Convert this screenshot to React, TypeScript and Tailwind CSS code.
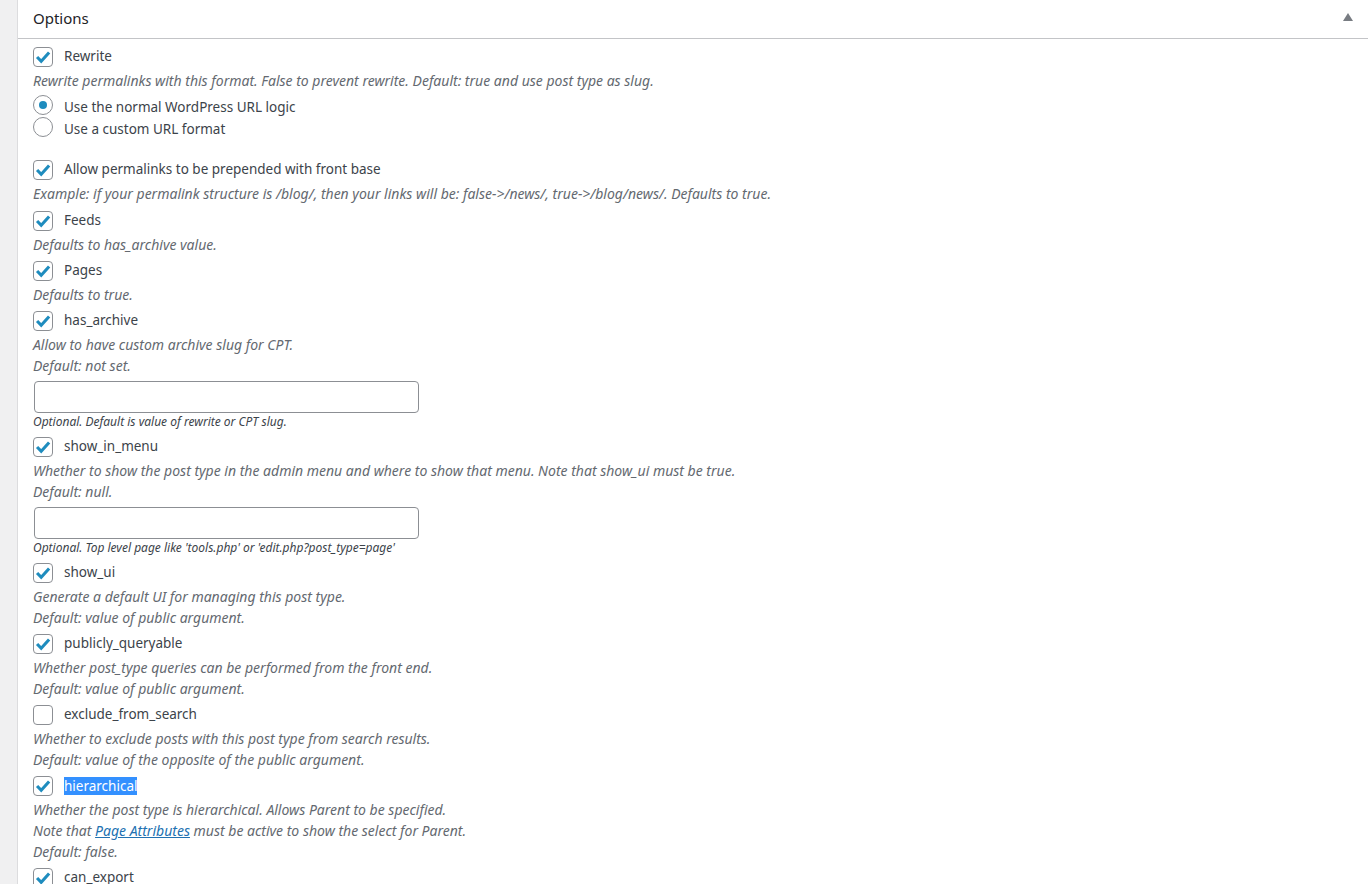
import React from "react";

const font = { fontFamily: '"Noto Sans", "Open Sans", sans-serif' };

function Check({ checked }: { checked: boolean }) {
  return (
    <span className="w-5 h-5 shrink-0 rounded-[4px] border border-[#8c8f94] bg-white flex items-center justify-center">
      {checked && (
        <svg width="18" height="18" viewBox="0 0 20 20">
          <path d="M3.4 10 L8 14.8 L16.8 5" fill="none" stroke="#1e8cbe" strokeWidth="3.4" strokeLinejoin="miter" />
        </svg>
      )}
    </span>
  );
}

function Radio({ checked, label }: { checked: boolean; label: string }) {
  return (
    <div className="h-[22px] flex items-center">
      <span className="w-5 h-5 shrink-0 rounded-full border border-[#8c8f94] bg-white flex items-center justify-center">
        {checked && <span className="w-2 h-2 rounded-full bg-[#1e8cbe]" />}
      </span>
      <span className="ml-[11px] mt-[4px] text-[13.5px] text-[#3c434a]">{label}</span>
    </div>
  );
}

function Row({ checked, label, selected }: { checked: boolean; label: string; selected?: boolean }) {
  return (
    <div className="h-[27px] flex items-center">
      <Check checked={checked} />
      <span
        className={
          selected
            ? "ml-[11px] text-[13.5px] leading-[18px] bg-[#3390ff] text-white"
            : "ml-[11px] text-[13.5px] text-[#3c434a]"
        }
      >
        {label}
      </span>
    </div>
  );
}

function Desc({ children }: { children: React.ReactNode }) {
  return <p className="h-[21px] leading-[21px] text-[14px] italic text-[#646970] whitespace-nowrap">{children}</p>;
}

function Small({ children }: { children: React.ReactNode }) {
  return <p className="h-[18px] leading-[18px] text-[12px] italic text-[#3c434a] whitespace-nowrap">{children}</p>;
}

function Field() {
  return <div className="mt-[5px] ml-px w-[385px] h-8 rounded-[4px] border border-[#8c8f94] bg-white" />;
}

type Opt = { label: string; checked: boolean; desc: React.ReactNode[]; input?: string; selected?: boolean };

const options: Opt[] = [
  { label: "Feeds", checked: true, desc: ["Defaults to has_archive value."] },
  { label: "Pages", checked: true, desc: ["Defaults to true."] },
  {
    label: "has_archive",
    checked: true,
    desc: ["Allow to have custom archive slug for CPT.", "Default: not set."],
    input: "Optional. Default is value of rewrite or CPT slug.",
  },
  {
    label: "show_in_menu",
    checked: true,
    desc: [
      "Whether to show the post type in the admin menu and where to show that menu. Note that show_ui must be true.",
      "Default: null.",
    ],
    input: "Optional. Top level page like 'tools.php' or 'edit.php?post_type=page'",
  },
  {
    label: "show_ui",
    checked: true,
    desc: ["Generate a default UI for managing this post type.", "Default: value of public argument."],
  },
  {
    label: "publicly_queryable",
    checked: true,
    desc: ["Whether post_type queries can be performed from the front end.", "Default: value of public argument."],
  },
  {
    label: "exclude_from_search",
    checked: false,
    desc: [
      "Whether to exclude posts with this post type from search results.",
      "Default: value of the opposite of the public argument.",
    ],
  },
  {
    label: "hierarchical",
    checked: true,
    selected: true,
    desc: [
      "Whether the post type is hierarchical. Allows Parent to be specified.",
      <>
        Note that <a className="underline text-[#2271b1]">Page Attributes</a> must be active to show the select for
        Parent.
      </>,
      "Default: false.",
    ],
  },
  { label: "can_export", checked: true, desc: [] },
];

export default function App() {
  return (
    <div className="w-[1368px] h-[884px] overflow-hidden flex bg-[#f0f0f1]" style={font}>
      <div className="w-[18px] shrink-0 border-r border-[#dcdcde]" />
      <div className="flex-1 bg-white flex flex-col">
        <div className="h-[39px] shrink-0 border-b border-[#c3c4c7] flex items-center justify-between pl-[15px] pr-[15px]">
          <h2 className="text-[15px] text-[#1d2327] mb-px">Options</h2>
          <svg width="10" height="8" viewBox="0 0 10 8" className="mb-[4px]">
            <path d="M5 0 L10 8 L0 8 Z" fill="#787c82" />
          </svg>
        </div>

        <div className="pl-[15px] pt-[4px]">
          <Row checked label="Rewrite" />
          <Desc>Rewrite permalinks with this format. False to prevent rewrite. Default: true and use post type as slug.</Desc>
          <div className="mt-[3px]">
            <Radio checked label="Use the normal WordPress URL logic" />
            <Radio checked={false} label="Use a custom URL format" />
          </div>

          <div className="mt-[18px] mb-[3px]">
            <Row checked label="Allow permalinks to be prepended with front base" />
            <Desc>
              Example: if your permalink structure is /blog/, then your links will be: false-&gt;/news/,
              true-&gt;/blog/news/. Defaults to true.
            </Desc>
          </div>

          {options.map((o) => (
            <div key={o.label} className="mb-[2px]">
              <Row checked={o.checked} label={o.label} selected={o.selected} />
              {o.desc.map((d, i) => (
                <Desc key={i}>{d}</Desc>
              ))}
              {o.input && (
                <>
                  <Field />
                  <Small>{o.input}</Small>
                </>
              )}
            </div>
          ))}
        </div>
      </div>
    </div>
  );
}
